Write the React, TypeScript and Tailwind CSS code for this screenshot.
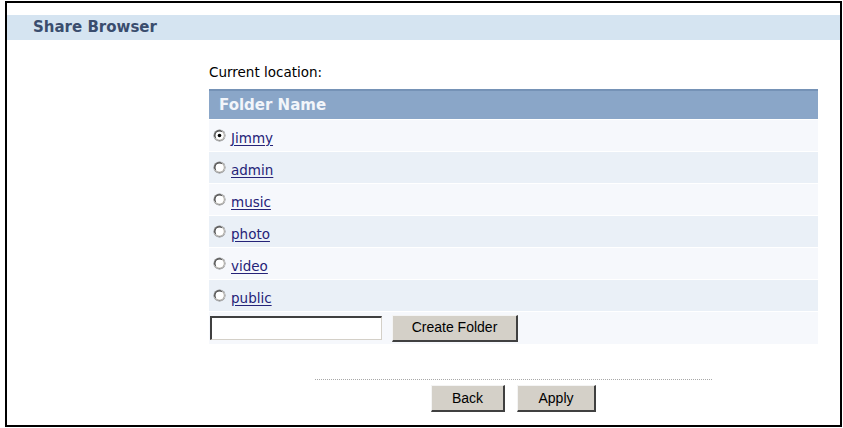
import React from 'react';

const folders = ['Jimmy', 'admin', 'music', 'photo', 'video', 'public'];

const Radio = ({ checked }: { checked: boolean }) => (
  <svg width="13" height="13" viewBox="0 0 13 13" className="shrink-0">
    <circle cx="6.5" cy="6.5" r="6" fill="#808080" />
    <path d="M1.2 8.5 A6 6 0 0 0 11.8 8.5 A6 6 0 0 0 8.5 1.2 Z" fill="#f4f4f4" />
    <circle cx="6.5" cy="6.5" r="5" fill="#404040" />
    <path d="M2.6 9.2 A5 5 0 0 0 10.4 9.2 A5 5 0 0 0 9.2 2.6 Z" fill="#d4d0c8" />
    <circle cx="6.5" cy="6.5" r="4" fill="#ffffff" />
    {checked && <circle cx="6.5" cy="6.5" r="1.8" fill="#000000" />}
  </svg>
);

const OldButton = ({ label, width }: { label: string; width: string }) => (
  <button
    className={`${width} h-[27px] bg-[#d4d0c8] border-t border-l border-t-[#f4f4f4] border-l-[#f4f4f4] border-r-2 border-b-2 border-r-[#404040] border-b-[#404040] text-[14px] text-black font-['Liberation_Sans',Arial,sans-serif]`}
  >
    {label}
  </button>
);

export default function App() {
  return (
    <div className="ml-[5px] mt-[1px] w-[837px] h-[426px] border-2 border-black bg-white pt-[12px] font-['DejaVu_Sans',Verdana,sans-serif]">
      <div className="h-[25px] bg-[#d5e4f1] pl-[26px] flex items-center">
        <span className="text-[15px] font-bold text-[#3a4d6e]">Share Browser</span>
      </div>

      <div className="ml-[202px] w-[609px]">
        <div className="mt-[24px] text-[13.5px] leading-[17px] text-black">Current location:</div>

        <div className="mt-[8px] h-[30px] bg-[#8aa6c8] border-t-2 border-[#7592b6] flex items-center pl-[10px]">
          <span className="text-[15px] font-bold text-[#f2f5fa]">Folder Name</span>
        </div>

        {folders.map((name, i) => (
          <div
            key={name}
            className={`mt-px h-[31px] flex items-center pl-[4px] gap-[5px] ${i % 2 === 0 ? 'bg-[#f6f8fc]' : 'bg-[#eaf0f7]'}`}
          >
            <Radio checked={i === 0} />
            <a href="#" className="text-[13.5px] text-[#252378] underline underline-offset-2 mt-[5px]">
              {name}
            </a>
          </div>
        ))}

        <div className="mt-px h-[32px] bg-[#f6f8fc] flex items-center pl-[1px] gap-[10px]">
          <input
            type="text"
            className="w-[172px] h-[24px] bg-white border-t-2 border-l-2 border-t-[#404040] border-l-[#404040] border-r border-b border-r-[#d4d0c8] border-b-[#d4d0c8] outline-none"
          />
          <OldButton label="Create Folder" width="w-[126px]" />
        </div>

        <div className="mt-[35px] mx-auto w-[397px] border-t border-dotted border-[#a8a8a8]" />

        <div className="mt-[5px] flex justify-center gap-[12px]">
          <OldButton label="Back" width="w-[74px]" />
          <OldButton label="Apply" width="w-[79px]" />
        </div>
      </div>
    </div>
  );
}
